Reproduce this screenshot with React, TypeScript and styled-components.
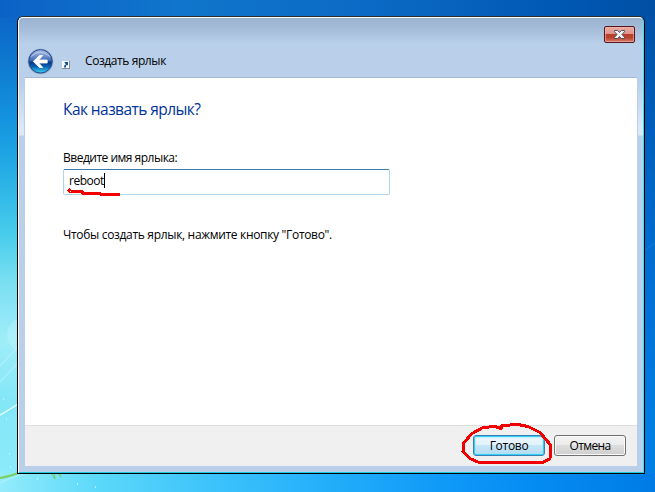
import React from "react";
import styled, { createGlobalStyle } from "styled-components";

const GlobalStyle = createGlobalStyle`
  * { box-sizing: border-box; }
  body { margin: 0; overflow: hidden; }
`;

const Desktop = styled.div`
  position: relative;
  width: 655px;
  height: 492px;
  padding: 16px 10px 18px 17px;
  overflow: hidden;
  font-family: "Open Sans", "Noto Sans", sans-serif;
  font-size: 12px;
  color: #000;
  background:
    linear-gradient(90deg, #0b62c6 0, #1075cc 180px, #0b6ac5 370px, #0059b5 550px, #004fa5 655px) 0 0 / 655px 17px no-repeat,
    linear-gradient(90deg, #94ecfb 0, #5bd8fa 100px, #3bc2fb 220px, #25b0fa 320px, #109af8 440px, #048bf2 540px, #007be6 655px) 0 473px / 655px 19px no-repeat,
    linear-gradient(180deg, #0b62c6 0, #0b66c8 17px, #0d78cf 60px, #1494df 120px, #20a7e4 160px, #48cdec 235px, #78def2 280px, #a0edf9 340px, #83e7f7 400px, #8eebfa 492px) 0 0 / 20px 492px no-repeat,
    linear-gradient(180deg, #004fa5, #005dbc 120px, #006bd0 240px, #007be4 400px, #0080e8 492px);
`;

const Wallpaper = styled.svg`
  position: absolute;
  inset: 0;
`;

const Dialog = styled.div`
  position: relative;
  display: flex;
  flex-direction: column;
  width: 628px;
  height: 458px;
  padding: 1px 7px 7px;
  border: 1px solid #000;
  border-top-color: #292d33;
  border-radius: 6px 6px 0 0;
  background:
    linear-gradient(180deg, #bad0ea, #dce8f5 45px, #dce8f5 52px, #bad1e9 53px) 1px 66px / 5px 54px no-repeat,
    linear-gradient(180deg, #bad0ea, #dce8f5 45px, #dce8f5 52px, #bad1e9 53px) 100% 66px / 6px 54px no-repeat,
    linear-gradient(180deg, #98b2d0 0, #a5bdd9 12px, #b8d0e9 27px, #bad0ea 32px) padding-box;
  &::before {
    content: "";
    position: absolute;
    inset: 0;
    border: 1px solid #fff;
    border-right-color: #45dceb;
    border-bottom-color: #1cc9df;
    border-radius: 5px 5px 0 0;
    pointer-events: none;
  }
`;

const TitleBar = styled.div`
  display: flex;
  justify-content: flex-end;
  height: 27px;
  padding: 8px 2px 0 0;
`;

const CloseButton = styled.button`
  display: grid;
  place-items: center;
  width: 31px;
  height: 17px;
  padding: 0;
  border: 1px solid #581521;
  border-radius: 2px;
  background: linear-gradient(#e9aba1 0, #df958b 46%, #b73e29 50%, #bd452e 72%, #d47d6c 100%);
  box-shadow: inset 0 0 0 1px #edb7ad99;
`;

const Header = styled.div`
  display: flex;
  align-items: center;
  height: 33px;
  padding-left: 2px;
  border-bottom: 1px solid #a3b9d5;
`;

const ShortcutIcon = styled.svg`
  margin: 7px 15px 0 8px;
`;

const Label = styled.span<{ $spacing?: number }>`
  line-height: 16px;
  white-space: nowrap;
  letter-spacing: ${(p) => p.$spacing ?? 0}px;
`;

const Content = styled.main`
  display: flex;
  flex-direction: column;
  align-items: flex-start;
  height: 347px;
  padding: 20px 38px 0;
  background: #fff;
`;

const Heading = styled.h1`
  height: 22px;
  margin: 0 0 30px;
  color: #003399;
  font-size: 15.5px;
  font-weight: 400;
  line-height: 22px;
  letter-spacing: -0.56px;
  white-space: nowrap;
`;

const NameField = styled.div`
  display: flex;
  width: 327px;
  height: 26px;
  margin: 3px 0 32px;
  padding: 3px 5px 0;
  border: 1px solid #b1d3eb;
  border-top-color: #3d7bad;
  border-radius: 2px;
`;

const Caret = styled.span`
  width: 1px;
  height: 15px;
  background: #000;
`;

const Footer = styled.footer`
  display: flex;
  justify-content: flex-end;
  gap: 9px;
  height: 41px;
  padding: 9px 11px 0 0;
  border-top: 1px solid #dfdfdf;
  background: #f0f0f0;
`;

const Button = styled.button<{ $primary?: boolean }>`
  width: 72px;
  height: 21px;
  padding: 0;
  border: 1px solid ${(p) => (p.$primary ? "#3c7fb1" : "#707070")};
  border-radius: 3px;
  color: #000;
  font: 12px/18px "Open Sans", "Noto Sans", sans-serif;
  letter-spacing: ${(p) => (p.$primary ? "-0.3px" : "-0.6px")};
  background: ${(p) =>
    p.$primary
      ? "linear-gradient(#edf7fd 0, #e1f2fb 49%, #c7e7f8 50%, #b4daf0 100%)"
      : "linear-gradient(#f3f3f3 0, #ebebeb 49%, #dddddd 50%, #cfcfcf 100%)"};
  box-shadow: ${(p) =>
    p.$primary ? "inset 0 0 0 1px #32d0f8, inset 0 0 0 2px #9ee5f980" : "inset 0 0 0 1px #fafafa"};
`;

const Markup = styled.svg`
  position: absolute;
  inset: 0;
  pointer-events: none;
`;

const BackIcon = () => (
  <svg width="27" height="27" viewBox="0 0 27 27">
    <defs>
      <linearGradient id="orb" x2="0" y2="1">
        <stop offset="0" stopColor="#b0bfe5" />
        <stop offset=".25" stopColor="#7796cf" />
        <stop offset=".5" stopColor="#3662ae" />
        <stop offset=".52" stopColor="#06327e" />
        <stop offset=".72" stopColor="#0860b4" />
        <stop offset="1" stopColor="#43d5f5" />
      </linearGradient>
    </defs>
    <circle cx="13.5" cy="13.5" r="12.8" fill="#8fa7c8" />
    <circle cx="13.5" cy="13.3" r="11.7" fill="url(#orb)" stroke="#214b8d" strokeWidth="1" />
    <path d="M4 8.5Q13 .2 23 8.5" fill="none" stroke="#d6e1f6" strokeOpacity=".6" />
    <path d="M6.3 13.5 12.5 7.5h3.2l-3.9 4.5h8.4v3H11.8l3.9 4.5h-3.2Z" fill="#fff" stroke="#fff" strokeWidth=".8" strokeLinejoin="round" />
  </svg>
);

export default function App() {
  return (
    <>
      <GlobalStyle />
      <Desktop>
        <Wallpaper width="655" height="492" fill="none">
          <circle cx="24" cy="335" r="17" fill="#d4fbff" fillOpacity=".25" />
          <path d="M0 366 18 347M0 382 18 363" stroke="#d5f9ff" strokeOpacity=".6" />
          <path d="M0 415Q9 410 18 404" stroke="#e4ffff" strokeWidth="1.5" />
          <path d="M0 478Q11 476 18 473" stroke="#7bd05c" strokeWidth="2" />
          <path d="M0 483Q20 473 37 472" stroke="#c2f7fc" strokeOpacity=".7" />
          <path d="m51 473 4 6-1-6m4 0 3 4-2-4" stroke="#7bc94a" />
          <path d="M645 250 655 243" stroke="#2289ea" strokeOpacity=".5" />
          <path d="M9 454h1M10 467h1M3 399h1M6 419h1M95 487h1M37 479h1M77 484h1" stroke="#d4fbff" strokeWidth="2" strokeOpacity=".7" />
        </Wallpaper>
        <Dialog>
          <TitleBar>
            <CloseButton aria-label="Закрыть">
              <svg width="13" height="11" viewBox="0 0 13 11">
                <path d="M1.5 1.5h3l2 2 2-2h3v1.2L9 5.5l2.5 2.8v1.2h-3l-2-2-2 2h-3V8.3L4 5.5 1.5 2.7Z" fill="#f3f5f4" stroke="#4b5362" strokeWidth="1" />
              </svg>
            </CloseButton>
          </TitleBar>
          <Header>
            <BackIcon />
            <ShortcutIcon width="8" height="8" viewBox="0 0 8 8">
              <path d="M0 0h8v8H0Z" fill="#858e9b" />
              <path d="M0 0h7v7H0Z" fill="#f4fafc" />
              <path d="M2 6.5Q1.8 3.6 4 3.2L2.7 2V1H6v3.5L5 3.8Q3.5 4.5 4 6.5Z" fill="#14509b" />
            </ShortcutIcon>
            <Label $spacing={-0.41}>Создать ярлык</Label>
          </Header>
          <Content>
            <Heading>Как назвать ярлык?</Heading>
            <Label $spacing={-0.5}>Введите имя ярлыка:</Label>
            <NameField>
              <Label $spacing={-0.5}>reboot</Label>
              <Caret />
            </NameField>
            <Label $spacing={-0.32}>Чтобы создать ярлык, нажмите кнопку "Готово".</Label>
          </Content>
          <Footer>
            <Button $primary>Готово</Button>
            <Button>Отмена</Button>
          </Footer>
        </Dialog>
        <Markup width="655" height="492" fill="none" stroke="#f10000" strokeWidth="3" strokeLinecap="square" strokeLinejoin="round" shapeRendering="crispEdges">
          <path d="m69.5 190.5 1 1H82l1 2h17l1 1h17.5" />
          <path d="m501 428.5-6-2-12 1-11 6-8 9-1 9 7 7 9 4h64l7-4 1-13-11-13-12-6-10-2-16 1-2 2" />
        </Markup>
      </Desktop>
    </>
  );
}
